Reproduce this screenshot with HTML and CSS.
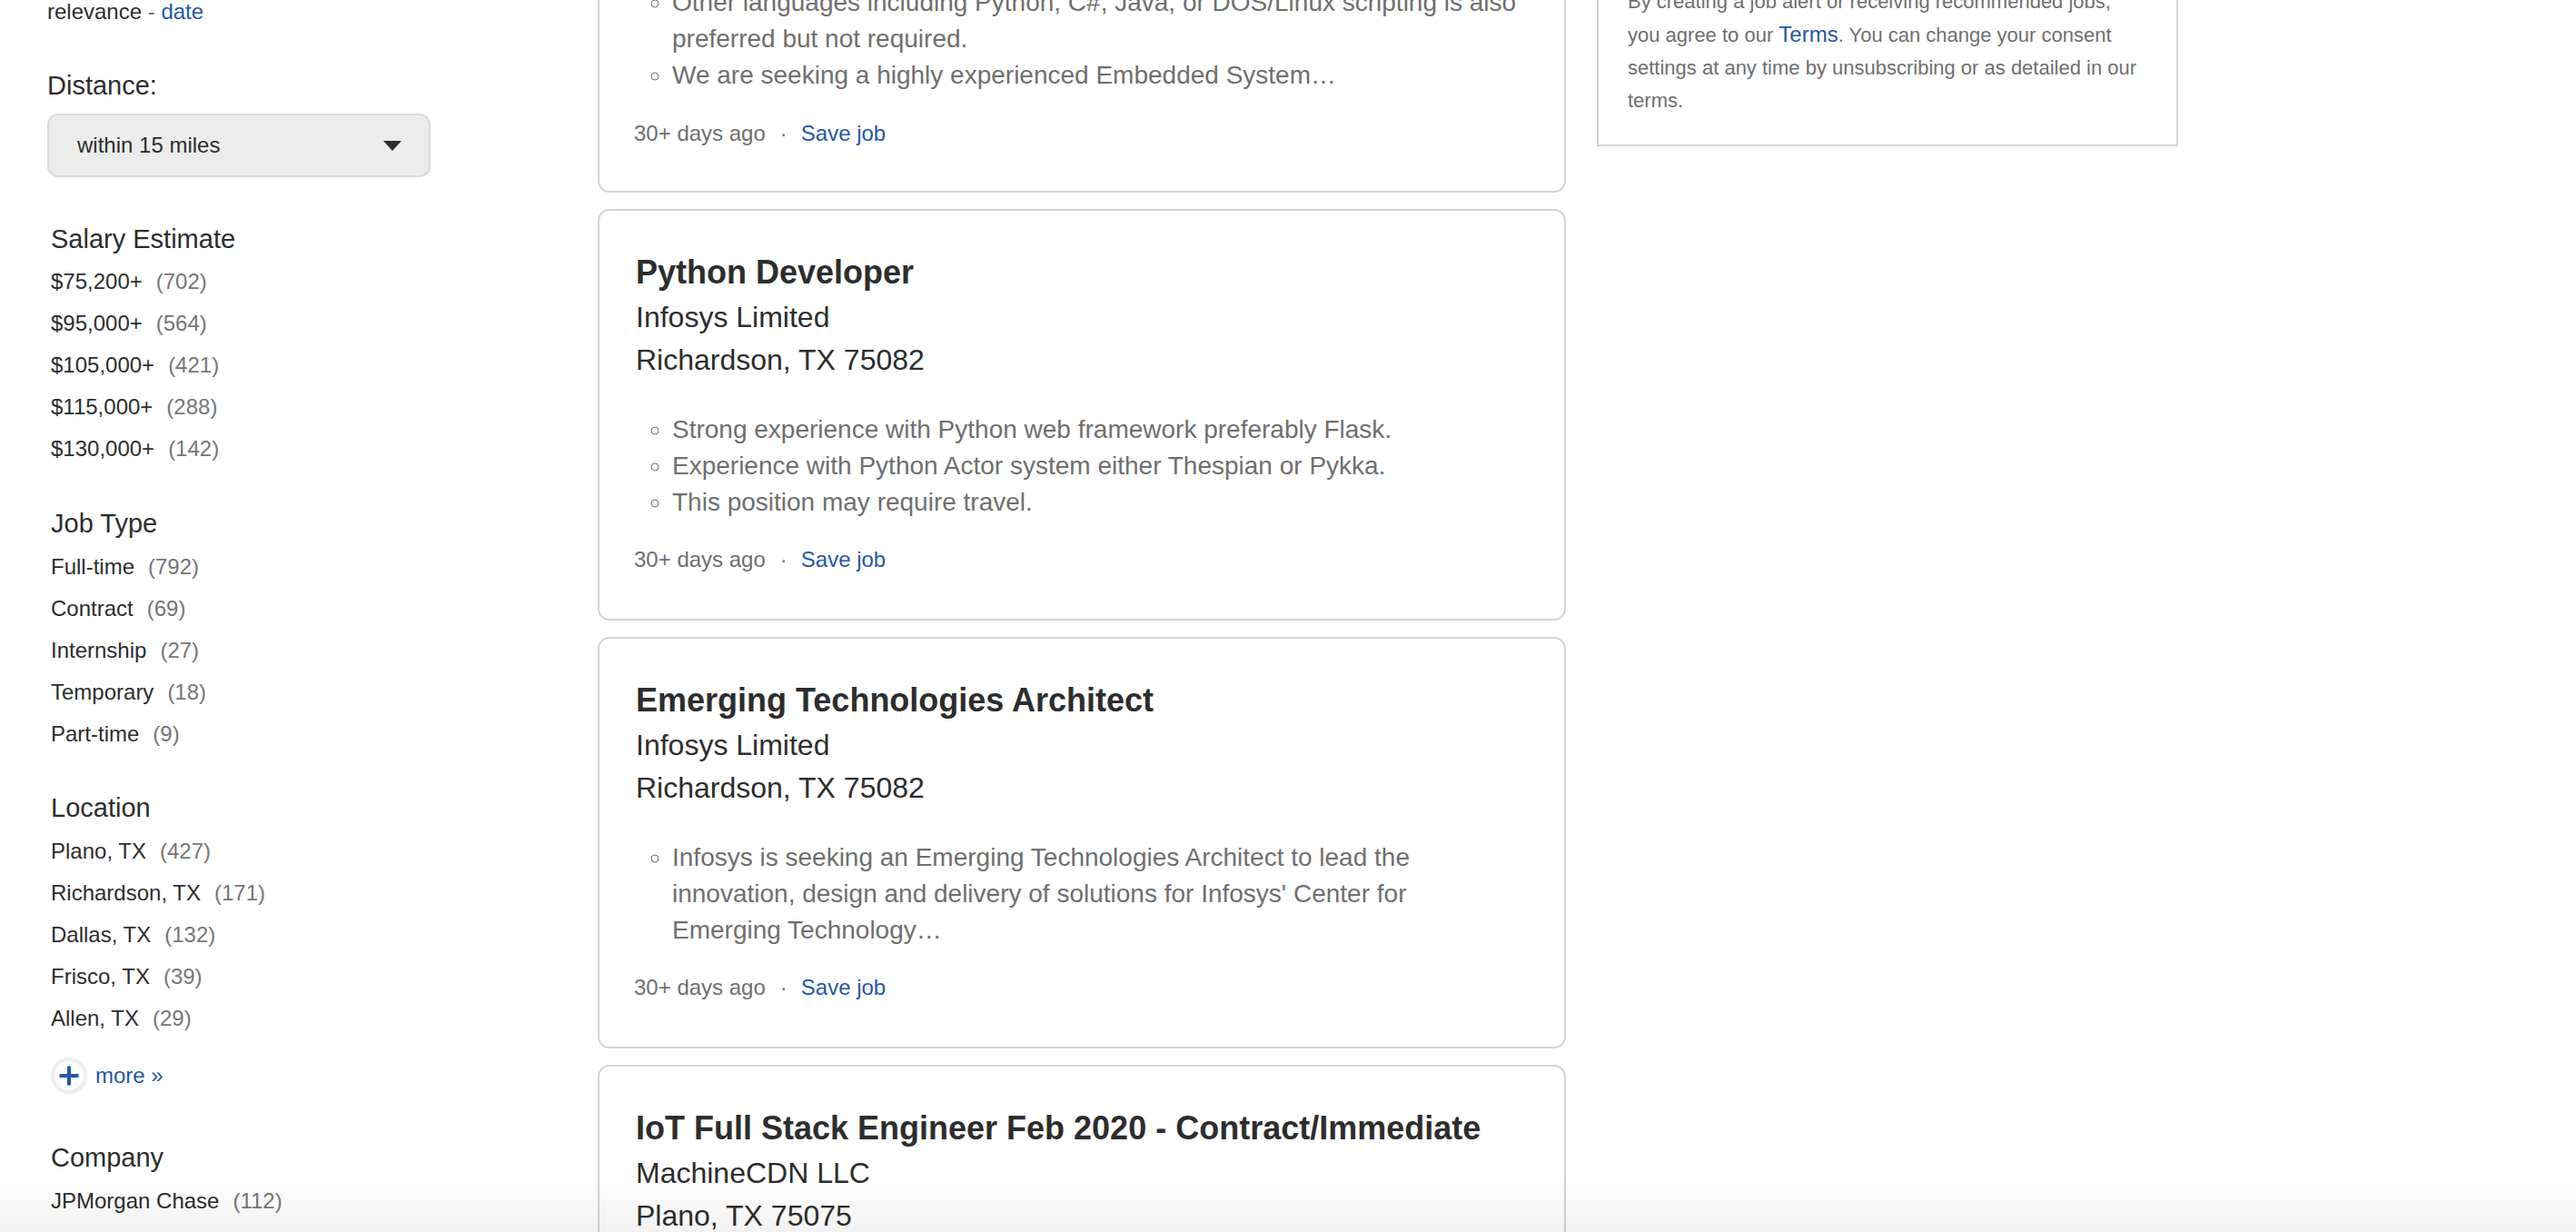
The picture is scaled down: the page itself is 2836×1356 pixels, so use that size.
FILE: index.html
```html
<!DOCTYPE html>
<html lang="en">
<head>
<meta charset="utf-8">
<title>Jobs</title>
<link rel="stylesheet" href="styles.css">
</head>
<body>
<div class="page">
  <aside class="sidebar">
    <div class="sort">relevance <span class="sep">-</span> <a class="link" href="#">date</a></div>
    <div class="distance-label">Distance:</div>
    <div class="select">
      <span>within 15 miles</span>
      <span class="caret"></span>
    </div>

    <section class="filter filter-salary">
      <h3>Salary Estimate</h3>
      <ul>
        <li><a href="#">$75,200+</a><span class="count">(702)</span></li>
        <li><a href="#">$95,000+</a><span class="count">(564)</span></li>
        <li><a href="#">$105,000+</a><span class="count">(421)</span></li>
        <li><a href="#">$115,000+</a><span class="count">(288)</span></li>
        <li><a href="#">$130,000+</a><span class="count">(142)</span></li>
      </ul>
    </section>

    <section class="filter filter-jobtype">
      <h3>Job Type</h3>
      <ul>
        <li><a href="#">Full-time</a><span class="count">(792)</span></li>
        <li><a href="#">Contract</a><span class="count">(69)</span></li>
        <li><a href="#">Internship</a><span class="count">(27)</span></li>
        <li><a href="#">Temporary</a><span class="count">(18)</span></li>
        <li><a href="#">Part-time</a><span class="count">(9)</span></li>
      </ul>
    </section>

    <section class="filter">
      <h3>Location</h3>
      <ul>
        <li><a href="#">Plano, TX</a><span class="count">(427)</span></li>
        <li><a href="#">Richardson, TX</a><span class="count">(171)</span></li>
        <li><a href="#">Dallas, TX</a><span class="count">(132)</span></li>
        <li><a href="#">Frisco, TX</a><span class="count">(39)</span></li>
        <li><a href="#">Allen, TX</a><span class="count">(29)</span></li>
      </ul>
      <a class="more" href="#">
        <span class="more-icon">
          <svg width="22" height="22" viewBox="0 0 22 22"><path d="M11 0.5V21.5M0.5 11H21.5" stroke="#2557a7" stroke-width="4.2" fill="none"/></svg>
        </span>
        <span>more »</span>
      </a>
    </section>

    <section class="filter filter-company">
      <h3>Company</h3>
      <ul>
        <li><a href="#">JPMorgan Chase</a><span class="count">(112)</span></li>
      </ul>
    </section>
  </aside>

  <main class="results">
    <article class="card card-cut">
      <ul class="snippet">
        <li>Other languages including Python, C#, Java, or DOS/Linux scripting is also preferred but not required.</li>
        <li>We are seeking a highly experienced Embedded System…</li>
      </ul>
      <div class="meta"><span>30+ days ago</span><span class="dot">·</span><a class="link" href="#">Save job</a></div>
    </article>

    <article class="card">
      <h2 class="title">Python Developer</h2>
      <div class="company">Infosys Limited</div>
      <div class="location">Richardson, TX 75082</div>
      <ul class="snippet">
        <li>Strong experience with Python web framework preferably Flask.</li>
        <li>Experience with Python Actor system either Thespian or Pykka.</li>
        <li>This position may require travel.</li>
      </ul>
      <div class="meta"><span>30+ days ago</span><span class="dot">·</span><a class="link" href="#">Save job</a></div>
    </article>

    <article class="card">
      <h2 class="title">Emerging Technologies Architect</h2>
      <div class="company">Infosys Limited</div>
      <div class="location">Richardson, TX 75082</div>
      <ul class="snippet">
        <li>Infosys is seeking an Emerging Technologies Architect to lead the innovation, design and delivery of solutions for Infosys' Center for Emerging Technology…</li>
      </ul>
      <div class="meta"><span>30+ days ago</span><span class="dot">·</span><a class="link" href="#">Save job</a></div>
    </article>

    <article class="card">
      <h2 class="title">IoT Full Stack Engineer Feb 2020 - Contract/Immediate</h2>
      <div class="company">MachineCDN LLC</div>
      <div class="location">Plano, TX 75075</div>
      <ul class="snippet">
        <li>Build IoT dashboards and data pipelines.</li>
      </ul>
      <div class="meta"><span>30+ days ago</span><span class="dot">·</span><a class="link" href="#">Save job</a></div>
    </article>
  </main>

  <aside class="rail">
    <div class="consent">
      <p>By creating a job alert or receiving recommended jobs, you agree to our <a class="link terms" href="#">Terms</a>. You can change your consent settings at any time by unsubscribing or as detailed in our terms.</p>
    </div>
  </aside>
</div>
<div class="fade"></div>
</body>
</html>
```

FILE: styles.css
```css
html, body {
  margin: 0;
  padding: 0;
  background: #ffffff;
}

body {
  font-family: "Liberation Sans", Arial, Helvetica, sans-serif;
  color: #2d2d2d;
  height: 1356px;
  overflow: hidden;
}

a {
  text-decoration: none;
  color: inherit;
}

.link {
  color: #2557a7;
}

.page {
  display: grid;
  grid-template-columns: 572px 1066px 640px;
  column-gap: 34px;
  padding-left: 52px;
  align-items: start;
}

/* ---------- sidebar ---------- */
.sidebar {
  display: flex;
  flex-direction: column;
}

.sort {
  font-size: 24px;
  line-height: 26px;
}

.sort .sep {
  color: #767676;
}

.distance-label {
  font-size: 29px;
  line-height: 40px;
  margin-top: 48px;
}

.select {
  box-sizing: border-box;
  width: 422px;
  height: 70px;
  margin-top: 11px;
  background: #ececec;
  border: 2px solid #d9d9d9;
  border-radius: 12px;
  padding: 0 30px 0 31px;
  display: flex;
  align-items: center;
  justify-content: space-between;
  font-size: 24px;
}

.caret {
  width: 0;
  height: 0;
  border-left: 10px solid transparent;
  border-right: 10px solid transparent;
  border-top: 11px solid #2d2d2d;
}

.filter {
  padding-left: 4px;
  margin-top: 38px;
}

.filter-salary {
  margin-top: 48px;
}

.filter-jobtype {
  margin-top: 39px;
}

.filter h3 {
  margin: 0;
  font-size: 29px;
  line-height: 40px;
  font-weight: 400;
  color: #2d2d2d;
}

.filter ul {
  list-style: none;
  margin: 5px 0 0;
  padding: 0;
}

.filter-salary ul {
  margin-top: 4px;
}

.filter li {
  font-size: 24px;
  line-height: 46px;
  height: 46px;
}

.count {
  color: #767676;
  margin-left: 15px;
}

.more {
  display: flex;
  align-items: center;
  gap: 9px;
  margin-top: 20px;
  height: 40px;
  font-size: 24px;
  color: #2557a7;
}

.more-icon {
  box-sizing: border-box;
  width: 40px;
  height: 40px;
  border: 4px solid #efefef;
  border-radius: 50%;
  display: flex;
  align-items: center;
  justify-content: center;
}

.filter-company {
  margin-top: 50px;
}

/* ---------- results ---------- */
.results {
  display: flex;
  flex-direction: column;
  gap: 18px;
}

.card {
  box-sizing: border-box;
  border: 2px solid #d4d4d4;
  border-radius: 13px;
  padding: 41px 50px 47px 40px;
  background: #fff;
}

.card-cut {
  margin-top: -89px;
  padding-top: 39px;
  padding-bottom: 45px;
}

.title {
  margin: 0;
  font-size: 36px;
  line-height: 53px;
  font-weight: 700;
  color: #2d2d2d;
}

.company,
.location {
  font-size: 32px;
  line-height: 47px;
  color: #2d2d2d;
}

.snippet {
  margin: 33px 0 0;
  padding-left: 40px;
  list-style: circle;
  color: #6f6f6f;
  font-size: 28px;
  line-height: 40px;
}

.card-cut .snippet {
  margin-top: 31px;
}

.meta {
  margin-top: 25px;
  font-size: 24px;
  line-height: 36px;
  color: #6f6f6f;
  margin-left: -2px;
}

.card-cut .meta {
  margin-top: 26px;
}

.dot {
  margin: 0 15px 0 16px;
}

/* ---------- right rail ---------- */
.rail {
  margin-top: -48px;
}

.consent {
  border: 2px solid #d4d4d4;
  padding: 30px 32px;
}

.consent p {
  margin: 0;
  font-size: 22px;
  line-height: 36px;
  color: #6f6f6f;
}

.terms {
  font-size: 24px;
}

/* ---------- bottom fade overlay ---------- */
.fade {
  position: fixed;
  left: 0;
  right: 0;
  bottom: 0;
  height: 64px;
  background: linear-gradient(to bottom, rgba(0,0,0,0), rgba(0,0,0,0.05));
  pointer-events: none;
}
```
